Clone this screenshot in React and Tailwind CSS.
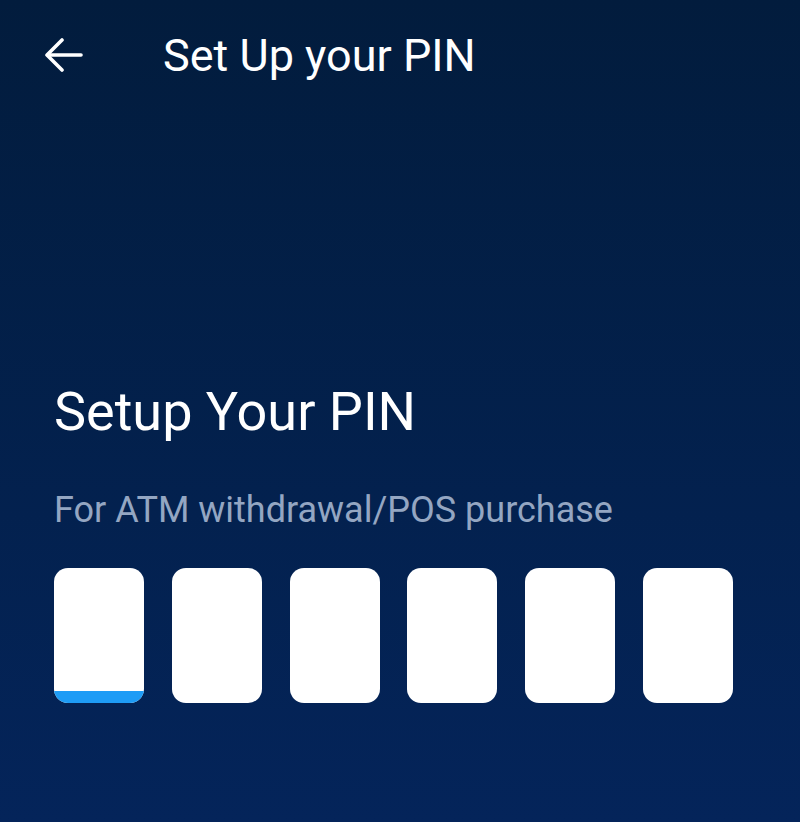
import React from 'react';

const PinBox = ({ active }) => (
  <div className="relative w-[90px] h-[135px] bg-white rounded-[14px] overflow-hidden">
    {active && <div className="absolute left-0 right-0 bottom-0 h-[12px] bg-[#1e9cf6]" />}
  </div>
);

const App = () => {
  const digits = [0, 1, 2, 3, 4, 5];

  return (
    <div
      className="w-[800px] h-[822px] bg-gradient-to-b from-[#021c3d] to-[#04245a] text-white"
      style={{ fontFamily: 'Roboto, "Noto Sans", sans-serif' }}
    >
      <div className="flex items-center h-[112px] pl-[45px] pb-[2px]">
        <svg width="38" height="34" viewBox="0 0 38 34" fill="none" stroke="white" strokeWidth="3.6" strokeLinecap="round" strokeLinejoin="round">
          <path d="M36 17H3" />
          <path d="M17 2L2 17l15 15" />
        </svg>
        <h1 className="ml-[80px] text-[45px] leading-none">Set Up your PIN</h1>
      </div>

      <div className="pl-[54px] pt-[273px]">
        <h2 className="text-[54px] leading-none">Setup Your PIN</h2>
        <p className="mt-[53px] text-[36px] leading-none text-[#94a6c2]">For ATM withdrawal/POS purchase</p>
        <div className="flex gap-[27.8px] mt-[40px]">
          {digits.map((d) => (
            <PinBox key={d} active={d === 0} />
          ))}
        </div>
      </div>
    </div>
  );
};

export default App;
